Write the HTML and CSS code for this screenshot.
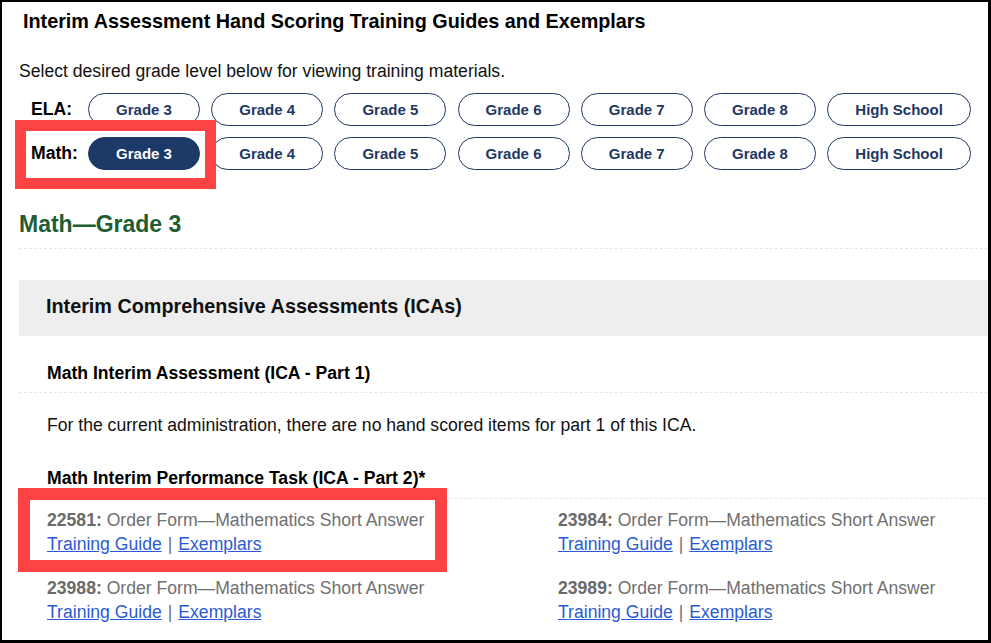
FILE: index.html
```html
<!DOCTYPE html>
<html lang="en">
<head>
    <meta charset="UTF-8">
    <meta name="viewport" content="width=device-width, initial-scale=1.0">
    <title>Interim Assessment Hand Scoring Training Guides and Exemplars</title>
    <link rel="stylesheet" href="styles.css">
</head>
<body>
    <div class="page">
        <h1 class="page-title">Interim Assessment Hand Scoring Training Guides and Exemplars</h1>
        <p class="intro">Select desired grade level below for viewing training materials.</p>

        <!-- grade pickers -->
        <div class="grade-rows">
            <div class="grade-row">
                <span class="grade-label">ELA:</span>
                <button class="grade-btn">Grade 3</button>
                <button class="grade-btn">Grade 4</button>
                <button class="grade-btn">Grade 5</button>
                <button class="grade-btn">Grade 6</button>
                <button class="grade-btn">Grade 7</button>
                <button class="grade-btn">Grade 8</button>
                <button class="grade-btn wide">High School</button>
            </div>
            <div class="grade-row">
                <span class="grade-label">Math:</span>
                <button class="grade-btn active">Grade 3</button>
                <button class="grade-btn">Grade 4</button>
                <button class="grade-btn">Grade 5</button>
                <button class="grade-btn">Grade 6</button>
                <button class="grade-btn">Grade 7</button>
                <button class="grade-btn">Grade 8</button>
                <button class="grade-btn wide">High School</button>
            </div>
        </div>

        <div class="content">
            <h2 class="grade-heading">Math&mdash;Grade 3</h2>

            <div class="panel-heading">Interim Comprehensive Assessments (ICAs)</div>

            <h3 class="sub-heading part1">Math Interim Assessment (ICA - Part 1)</h3>
            <p class="note">For the current administration, there are no hand scored items for part 1 of this ICA.</p>

            <h3 class="sub-heading part2">Math Interim Performance Task (ICA - Part 2)*</h3>
            <div class="items">
                <div class="item">
                    <div><strong>22581:</strong> Order Form&mdash;Mathematics Short Answer</div>
                    <div><a href="#">Training Guide</a><span class="sep">|</span><a href="#">Exemplars</a></div>
                </div>
                <div class="item">
                    <div><strong>23984:</strong> Order Form&mdash;Mathematics Short Answer</div>
                    <div><a href="#">Training Guide</a><span class="sep">|</span><a href="#">Exemplars</a></div>
                </div>
                <div class="item">
                    <div><strong>23988:</strong> Order Form&mdash;Mathematics Short Answer</div>
                    <div><a href="#">Training Guide</a><span class="sep">|</span><a href="#">Exemplars</a></div>
                </div>
                <div class="item">
                    <div><strong>23989:</strong> Order Form&mdash;Mathematics Short Answer</div>
                    <div><a href="#">Training Guide</a><span class="sep">|</span><a href="#">Exemplars</a></div>
                </div>
            </div>
        </div>

        <!-- callout boxes drawn over the page -->
        <div class="callout callout-grade"></div>
        <div class="callout callout-item"></div>
    </div>
</body>
</html>
```

FILE: styles.css
```css
html, body {
    margin: 0;
    padding: 0;
    background: #fff;
}
body {
    font-family: Arial, "Liberation Sans", sans-serif;
    font-size: 17.6px;
    color: #111;
}
.page {
    position: relative;
    box-sizing: border-box;
    width: 991px;
    height: 643px;
    overflow: hidden;
    border-style: solid;
    border-color: #000;
    border-width: 2px 3px 3px 2px;
    padding-top: 8px;
}
.page-title {
    margin: 0;
    padding-left: 21px;
    font-size: 19.8px;
    line-height: 23px;
    font-weight: bold;
    color: #000;
}
.intro {
    margin: 25px 0 0 17px;
    line-height: 26px;
}
.grade-rows {
    margin-top: 9px;
    padding-left: 29px;
    display: flex;
    flex-direction: column;
    gap: 11px;
}
.grade-row {
    display: flex;
    align-items: center;
    gap: 11.2px;
}
.grade-label {
    width: 45.8px;
    font-weight: bold;
    color: #000;
}
.grade-btn {
    box-sizing: border-box;
    width: 112px;
    height: 33px;
    padding: 0;
    border: 1px solid #1f3763;
    border-radius: 17px;
    background: #fff;
    color: #1f3763;
    font-family: Arial, "Liberation Sans", sans-serif;
    font-size: 15px;
    font-weight: bold;
}
.grade-btn.wide {
    width: 144px;
}
.grade-btn.active {
    background: #1d3967;
    border-color: #1d3967;
    color: #fff;
}
.content {
    margin-left: 17px;
}
.grade-heading {
    margin: 41px 0 0;
    padding-bottom: 11px;
    font-size: 23px;
    line-height: 26px;
    color: #215d31;
    border-bottom: 1px dashed #e6e6e6;
}
.panel-heading {
    margin-top: 31px;
    padding: 15px 27px 18px;
    background: #eeeeee;
    font-size: 19.8px;
    line-height: 23px;
    font-weight: bold;
    color: #111;
}
.sub-heading {
    margin: 0;
    padding-left: 28px;
    font-size: 17.6px;
    line-height: 22px;
    color: #000;
    border-bottom: 1px dashed #e6e6e6;
}
.sub-heading.part1 {
    margin-top: 26px;
    padding-bottom: 8px;
}
.sub-heading.part2 {
    margin-top: 30px;
    padding-bottom: 9px;
}
.note {
    margin: 20px 0 0 28px;
    line-height: 24px;
    color: #111;
}
.items {
    margin-top: 8.5px;
    padding-left: 28px;
    display: grid;
    grid-template-columns: 511px 1fr;
    row-gap: 20px;
}
.item {
    line-height: 24px;
    color: #707070;
}
.item strong {
    color: #6a6a68;
}
.item a {
    color: #2a5bd2;
}
.item .sep {
    margin: 0 6px;
}
.callout {
    position: absolute;
    box-sizing: border-box;
    border: 11.5px solid #fd4343;
    pointer-events: none;
}
.callout-grade {
    left: 13px;
    top: 118px;
    width: 201px;
    height: 69px;
}
.callout-item {
    left: 16px;
    top: 486px;
    width: 429px;
    height: 84px;
    border-width: 12px;
}
```
